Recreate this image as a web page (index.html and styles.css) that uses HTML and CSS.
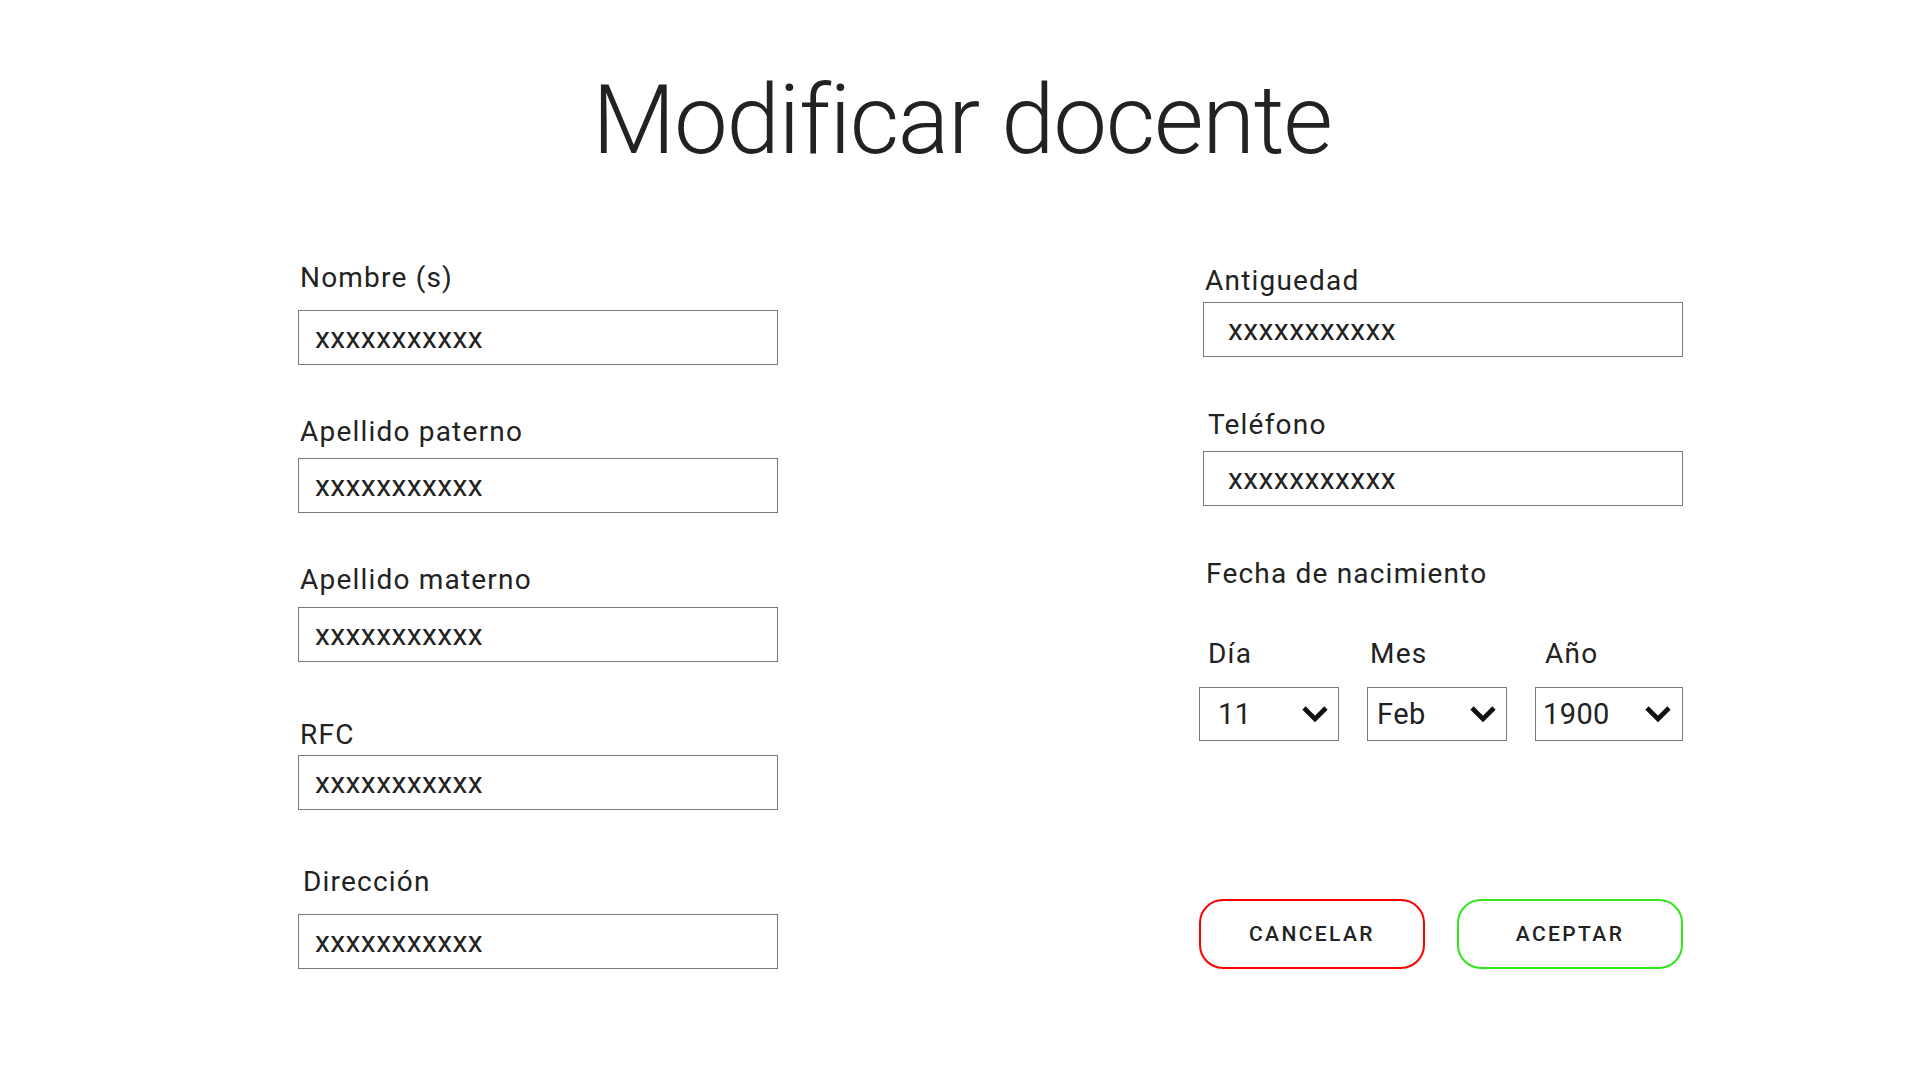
FILE: index.html
```html
<!DOCTYPE html>
<html lang="es">
<head>
<meta charset="utf-8">
<title>Modificar docente</title>
<link rel="stylesheet" href="styles.css">
</head>
<body>
<main class="page">
  <h1 class="title">Modificar docente</h1>
  <form class="form">
    <div class="col col--left">
      <div class="field">
        <label class="label label--m16">Nombre (s)</label>
        <div class="input">xxxxxxxxxxx</div>
      </div>
      <div class="field field--g51">
        <label class="label label--m10">Apellido paterno</label>
        <div class="input">xxxxxxxxxxx</div>
      </div>
      <div class="field field--g51">
        <label class="label label--m11">Apellido materno</label>
        <div class="input">xxxxxxxxxxx</div>
      </div>
      <div class="field field--g57">
        <label class="label label--m4">RFC</label>
        <div class="input">xxxxxxxxxxx</div>
      </div>
      <div class="field field--g56">
        <label class="label label--m16 label--in5">Dirección</label>
        <div class="input">xxxxxxxxxxx</div>
      </div>
    </div>

    <div class="col col--right">
      <div class="field">
        <label class="label label--m5 label--in6">Antiguedad</label>
        <div class="input input--right">xxxxxxxxxxx</div>
      </div>
      <div class="field field--g52">
        <label class="label label--m10 label--in9">Teléfono</label>
        <div class="input input--right">xxxxxxxxxxx</div>
      </div>
      <div class="field field--g52">
        <span class="label label--in7">Fecha de nacimiento</span>
      </div>
      <div class="date-row">
        <div class="date-part">
          <span class="label label--m17 label--in9">Día</span>
          <div class="select select--day">
            <span>11</span>
            <svg class="chevron" viewBox="0 0 28 18" width="28" height="18"><polyline points="3,3 14,14 25,3" fill="none" stroke="#111" stroke-width="4.6"/></svg>
          </div>
        </div>
        <div class="date-part">
          <span class="label label--m17 label--in3">Mes</span>
          <div class="select select--month">
            <span>Feb</span>
            <svg class="chevron" viewBox="0 0 28 18" width="28" height="18"><polyline points="3,3 14,14 25,3" fill="none" stroke="#111" stroke-width="4.6"/></svg>
          </div>
        </div>
        <div class="date-part">
          <span class="label label--m17 label--in10">Año</span>
          <div class="select select--year">
            <span>1900</span>
            <svg class="chevron" viewBox="0 0 28 18" width="28" height="18"><polyline points="3,3 14,14 25,3" fill="none" stroke="#111" stroke-width="4.6"/></svg>
          </div>
        </div>
      </div>
      <div class="actions">
        <button type="button" class="btn btn--cancel">CANCELAR</button>
        <button type="button" class="btn btn--ok">ACEPTAR</button>
      </div>
    </div>
  </form>
</main>
</body>
</html>
```
FILE: styles.css
```css
* { box-sizing: border-box; }

html, body {
  margin: 0;
  padding: 0;
  background: #ffffff;
}

body {
  font-family: Roboto, "Liberation Sans", sans-serif;
  color: #222222;
}

.page {
  width: 1920px;
  height: 1080px;
  padding-top: 72px;
}

.title {
  margin: 0 0 0 4px;
  font-size: 96px;
  font-weight: 300;
  line-height: 96px;
  letter-spacing: -1.3px;
  text-align: center;
  color: #222222;
}

.form {
  display: flex;
  margin-top: 94px;
  padding-left: 298px;
}

.col {
  display: flex;
  flex-direction: column;
}

.col--left {
  width: 480px;
}

.col--right {
  width: 484px;
  margin-left: 421px;
  padding-top: 3px;
}

.field {
  display: flex;
  flex-direction: column;
}

.field--g45 { margin-top: 45px; }
.field--g51 { margin-top: 51px; }
.field--g52 { margin-top: 52px; }
.field--g56 { margin-top: 56px; }
.field--g57 { margin-top: 57px; }

.label {
  display: block;
  font-size: 28px;
  line-height: 32px;
  font-weight: 400;
  padding-left: 2px;
  color: #222222;
  letter-spacing: 1.2px;
}

.label--m4 { margin-bottom: 4px; }
.label--m5 { margin-bottom: 5px; }
.label--m10 { margin-bottom: 10px; }
.label--m11 { margin-bottom: 11px; }
.label--m16 { margin-bottom: 16px; }
.label--m17 { margin-bottom: 17px; }

.label--in3 { padding-left: 3px; }
.label--in5 { padding-left: 5px; }
.label--in6 { padding-left: 6px; }
.label--in7 { padding-left: 7px; }
.label--in9 { padding-left: 9px; }
.label--in10 { padding-left: 10px; }

.input {
  display: flex;
  align-items: center;
  width: 480px;
  height: 55px;
  border: 1px solid #7a7a7a;
  padding-left: 16px;
  font-size: 30px;
  letter-spacing: 0.4px;
  color: #222222;
}

.input--right {
  margin-left: 4px;
  padding-left: 24px;
}

.date-row {
  display: flex;
  gap: 28px;
  margin-top: 48px;
}

.date-part {
  display: flex;
  flex-direction: column;
}

.select {
  display: flex;
  align-items: center;
  justify-content: space-between;
  height: 54px;
  border: 1px solid #7a7a7a;
  padding-right: 9px;
  font-size: 29px;
  letter-spacing: 0.4px;
  color: #222222;
}

.select--day { width: 140px; padding-left: 18px; }
.select--month { width: 140px; padding-left: 9px; }
.select--year { width: 148px; padding-left: 7px; padding-right: 10px; }

.chevron {
  display: block;
  flex: none;
}

.actions {
  display: flex;
  justify-content: space-between;
  margin-top: 158px;
}

.btn {
  width: 226px;
  height: 70px;
  border-radius: 24px;
  background: #ffffff;
  font-family: Roboto, "Liberation Sans", sans-serif;
  font-size: 21px;
  font-weight: 500;
  letter-spacing: 2.4px;
  color: #222222;
  padding: 0;
  cursor: pointer;
}

.btn--cancel { border: 2px solid #ff0000; }
.btn--ok { border: 2px solid #33e51a; }
```
